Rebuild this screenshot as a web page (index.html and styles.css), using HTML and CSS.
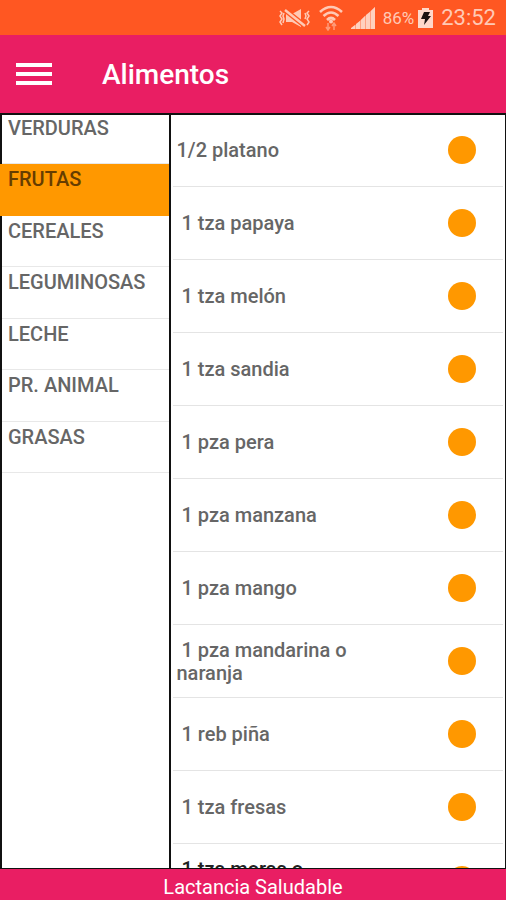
FILE: index.html
```html
<!DOCTYPE html>
<html lang="es">
  <head>
    <meta charset="UTF-8" />
    <meta name="viewport" content="width=device-width, initial-scale=1.0" />
    <title>Alimentos</title>
    <link rel="stylesheet" href="styles.css" />
  </head>
  <body>
    <div class="status-bar">
      <svg class="icon-mute" width="32" height="22" viewBox="0 0 32 22" aria-hidden="true">
        <path d="M7 7h6l9-5v18l-9-5H7z" fill="#ffc9b5" />
        <path d="M6 3l20 16" stroke="#ff5722" stroke-width="5" />
        <path d="M6 3l20 16" stroke="#ffc9b5" stroke-width="2.400" />
        <path d="M1 4l2 2-2 3 2 3-2 3 2 3M5 6l-1 3 1 3-1 4M30 4l-2 2 2 3-2 3 2 3-2 3M26 6l1 3-1 3" fill="none" stroke="#ffc9b5" stroke-width="1.500" />
      </svg>
      <svg class="icon-wifi" width="24" height="26" viewBox="0 0 24 26" aria-hidden="true">
        <path d="M1 7q11-10 22 0M4.500 11q7.500-7 15 0M8 15q4-4 8 0" fill="none" stroke="#ffc9b5" stroke-width="2.600" />
        <circle cx="12" cy="16.500" r="2" fill="#ffc9b5" />
        <path d="M9 18v7M7 22l2 3 2-3M15 25v-7M13 21l2-3 2 3" fill="none" stroke="#ff9a78" stroke-width="1.500" />
      </svg>
      <svg class="icon-signal" width="24" height="22" viewBox="0 0 24 22" aria-hidden="true">
        <path d="M0 22L24 0v22z" fill="#ff9f80" />
        <path d="M0 22v-1l4-3v4zM5 22v-5l4-3v8zM10 22v-9l4-4v13zM15 22V8l4-3v17zM20 22V4l4-4v22z" fill="#ffd0be" />
      </svg>
      <span class="battery-level">86%</span>
      <svg class="icon-battery" width="15" height="20" viewBox="0 0 15 20" aria-hidden="true">
        <path d="M4 0h7v2h4v18H0V2h4z" fill="#ffd8ca" />
        <path d="M6 4h6l-2 4h3l-7 9 1-6H3z" fill="#1d1110" />
      </svg>
      <span class="clock">23:52</span>
    </div>

    <header class="app-bar">
      <button class="menu-button" type="button" aria-label="Menú">
        <span></span>
        <span></span>
        <span></span>
      </button>
      <h1>Alimentos</h1>
    </header>

    <main class="content">
      <nav class="categories">
        <button type="button">VERDURAS</button>
        <button type="button" class="selected">FRUTAS</button>
        <button type="button">CEREALES</button>
        <button type="button">LEGUMINOSAS</button>
        <button type="button">LECHE</button>
        <button type="button">PR. ANIMAL</button>
        <button type="button">GRASAS</button>
      </nav>

      <ul class="foods">
        <li><span class="food-name">1/2 platano</span><span class="dot"></span></li>
        <li><span class="food-name"> 1 tza papaya</span><span class="dot"></span></li>
        <li><span class="food-name"> 1 tza melón</span><span class="dot"></span></li>
        <li><span class="food-name"> 1 tza sandia</span><span class="dot"></span></li>
        <li><span class="food-name"> 1 pza pera</span><span class="dot"></span></li>
        <li><span class="food-name"> 1 pza manzana</span><span class="dot"></span></li>
        <li><span class="food-name"> 1 pza mango</span><span class="dot"></span></li>
        <li><span class="food-name"> 1 pza mandarina o naranja</span><span class="dot"></span></li>
        <li><span class="food-name"> 1 reb piña</span><span class="dot"></span></li>
        <li><span class="food-name"> 1 tza fresas</span><span class="dot"></span></li>
        <li class="dark"><span class="food-name"> 1 tza moras o</span><span class="dot"></span></li>
      </ul>
    </main>

    <footer class="footer">Lactancia Saludable</footer>
  </body>
</html>
```

FILE: styles.css
```css
* {
  box-sizing: border-box;
}
body {
  margin: 0;
  height: 100vh;
  display: flex;
  flex-direction: column;
  font-family: Roboto, Arial, sans-serif;
  background: white;
}
button {
  border: none;
  background: none;
  font: inherit;
  color: inherit;
  cursor: pointer;
}

/* status bar */
.status-bar {
  flex: none;
  height: 35px;
  padding: 0 10px;
  display: flex;
  align-items: center;
  justify-content: flex-end;
  gap: 8px;
  background: #ff5722;
  color: #ffc9b5;
}
.battery-level {
  font-size: 17px;
}
.icon-battery {
  margin-left: -4px;
}
.clock {
  font-size: 22px;
}

/* app bar */
.app-bar {
  flex: none;
  height: 78px;
  padding: 0 16px;
  display: flex;
  align-items: center;
  gap: 50px;
  background: #e91e63;
  color: white;
}
.menu-button {
  width: 36px;
  padding: 0;
  display: flex;
  flex-direction: column;
  gap: 5px;
}
.menu-button span {
  height: 4px;
  background: white;
}
.app-bar h1 {
  margin: 0;
  font-size: 28px;
  font-weight: 500;
}

/* two lists */
.content {
  flex: 1;
  min-height: 0;
  display: flex;
  border: 2px solid #111;
  border-right-width: 1px;
  border-bottom-width: 1px;
  color: #666;
  font-size: 20px;
  font-weight: 500;
  line-height: 23px;
}
.categories {
  width: 33.3%;
  margin-top: -2px;
  display: flex;
  flex-direction: column;
}
.categories button {
  height: 52px;
  padding: 4px 6px;
  display: flex;
  align-items: flex-start;
  border-bottom: 1px solid #e8e8e8;
}
.categories button:nth-child(odd) {
  height: 51px;
}
.categories .selected {
  margin-left: -2px;
  padding-left: 8px;
  border-color: #ff9800;
  background: #ff9800;
  color: #663d00;
}
.foods {
  flex: 1;
  margin: -1px 0 0;
  padding: 0 2px;
  list-style: none;
  overflow: hidden;
  border-left: 2px solid #111;
}
.foods li {
  height: 73px;
  padding: 1px 27px 0 3px;
  display: flex;
  align-items: center;
  justify-content: space-between;
  border-bottom: 1px solid #e4e4e4;
}
.foods .dark {
  color: #222;
}
.food-name {
  max-width: 200px;
  white-space: pre-wrap;
}
.dark .food-name {
  height: 46px;
}
.dot {
  width: 28px;
  height: 28px;
  margin-bottom: 2px;
  border-radius: 50%;
  background: #ff9800;
}

.footer {
  flex: none;
  height: 31px;
  background: #e91e63;
  color: white;
  font-size: 20px;
  line-height: 37px;
  text-align: center;
}
```
